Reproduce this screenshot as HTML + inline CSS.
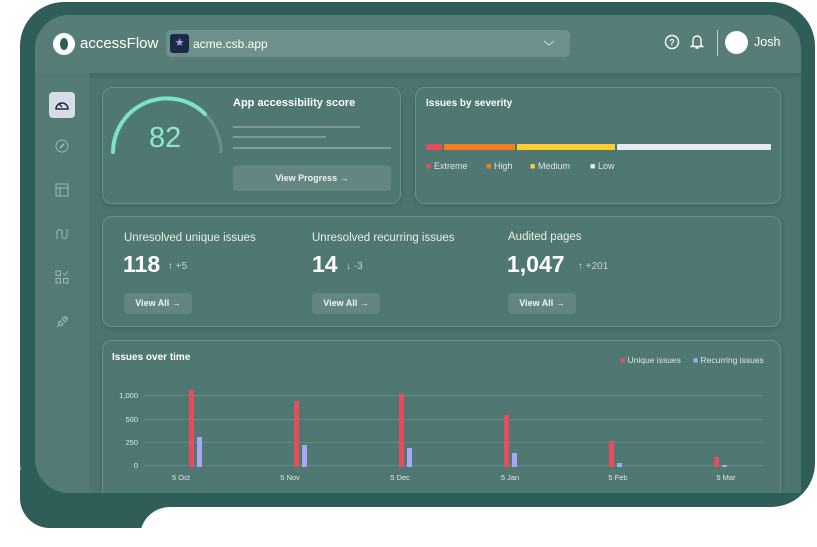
<!DOCTYPE html>
<html><head><meta charset="utf-8"><style>
*{box-sizing:border-box;margin:0;padding:0}
body{width:817px;height:535px;background:#fff;position:relative;overflow:hidden;font-family:"Liberation Sans",sans-serif;color:#fff}
.frame{position:absolute;left:20px;top:2px;width:795px;height:505px;background:#2f5d57;border-radius:44px}
.tail{position:absolute;left:20px;top:470px;width:170px;height:58px;background:#2f5d57;border-radius:0 0 0 30px}
.tailc{position:absolute;left:140px;top:507px;width:120px;height:40px;background:#fff;border-radius:30px 0 0 0}
.inner{position:absolute;left:35px;top:15px;width:766px;height:478px;background:#4c7570;border-radius:34px 34px 0 34px;overflow:hidden}
.hdr{position:absolute;left:0;top:0;width:766px;height:58px;background:#577d78;box-shadow:0 2px 6px rgba(0,0,0,.15)}
.side{position:absolute;left:0;top:58px;width:55px;height:420px;background:#537a74}
.card{position:absolute;background:#4f7872;border:1px solid #6b8f89;border-radius:10px;box-shadow:0 2px 6px rgba(0,0,0,.15)}
.t{position:absolute;font-size:11px;white-space:nowrap}
.btn{position:absolute;background:#628782;border-radius:4px;font-size:9px;font-weight:bold;text-align:center;color:#f0f4f3}
.small{font-size:7.5px;color:#dde7e5}
</style></head><body>
<div class="tail"></div><div class="tailc"></div>
<div class="frame"></div>
<div class="inner">
 <div class="hdr">
  <div style="position:absolute;left:18px;top:18px;width:22px;height:22px;border-radius:50%;background:#fff"></div>
  <div style="position:absolute;left:25px;top:23px;width:8px;height:12px;border-radius:50%;background:#2f5d57"></div>
  <div class="t" style="left:45px;top:20px;font-size:15px">accessFlow</div>
  <div style="position:absolute;left:131px;top:15px;width:404px;height:27px;background:#6c908b;border-radius:5px"></div>
  <div style="position:absolute;left:135px;top:19px;width:19px;height:19px;background:#1c2b44;border-radius:3px;color:#a9a3f0;font-size:11px;text-align:center;line-height:19px">★</div>
  <div class="t" style="left:158px;top:22px;font-size:12px">acme.csb.app</div>
  <svg style="position:absolute;left:508px;top:23px" width="12" height="10"><path d="M1 3l5 4 5-4" stroke="#b8ccc9" fill="none" stroke-width="1.3"/></svg>
  <svg style="position:absolute;left:629px;top:19px" width="16" height="16"><circle cx="8" cy="8" r="6.5" stroke="#fff" fill="none" stroke-width="1.4"/><text x="8" y="11.5" font-size="9" fill="#fff" text-anchor="middle" font-family="Liberation Sans" font-weight="bold">?</text></svg>
  <svg style="position:absolute;left:655px;top:18px" width="14" height="17"><path d="M3 12V7a4 4 0 018 0v5l1.5 1.5h-11z M5.5 15h3" stroke="#fff" fill="none" stroke-width="1.4"/></svg>
  <div style="position:absolute;left:682px;top:15px;width:1px;height:26px;background:#c9d6d4"></div>
  <div style="position:absolute;left:690px;top:16px;width:23px;height:23px;border-radius:50%;background:#fff"></div>
  <div class="t" style="left:719px;top:20px;font-size:12.5px">Josh</div>
 </div>
 <div class="side">
  <div style="position:absolute;left:14px;top:19px;width:26px;height:26px;background:#d6dde6;border-radius:4px"></div>
  <svg style="position:absolute;left:19px;top:24px" width="16" height="16"><path d="M2 12a6 6 0 1112 0z" stroke="#1e2e3e" fill="none" stroke-width="1.5"/><path d="M8 10l-3-3" stroke="#1e2e3e" stroke-width="1.5"/></svg>
  <svg style="position:absolute;left:20px;top:66px" width="14" height="14"><circle cx="7" cy="7" r="6" stroke="#9dbab5" fill="none"/><path d="M4.5 9.5l2-3 3-2-2 3z" stroke="#9dbab5" fill="none"/></svg>
  <svg style="position:absolute;left:20px;top:110px" width="14" height="14"><rect x="1" y="1" width="12" height="12" stroke="#9dbab5" fill="none"/><path d="M1 5h12M5 5v8" stroke="#9dbab5"/></svg>
  <svg style="position:absolute;left:20px;top:153px" width="14" height="16"><path d="M2 13V6a2.5 2.5 0 015 0v4a2.5 2.5 0 005 0V3" stroke="#9dbab5" fill="none"/></svg>
  <svg style="position:absolute;left:20px;top:197px" width="14" height="14"><rect x="1" y="1" width="4.5" height="4.5" stroke="#9dbab5" fill="none"/><rect x="1" y="8.5" width="4.5" height="4.5" stroke="#9dbab5" fill="none"/><rect x="8.5" y="8.5" width="4.5" height="4.5" stroke="#9dbab5" fill="none"/><path d="M8 3l2 2 3-4" stroke="#9dbab5" fill="none"/></svg>
  <svg style="position:absolute;left:20px;top:241px" width="15" height="15"><path d="M2 13l3-3M10 2l3 3M5 7l3 3-2 2-3-3zM7 5l3 3 2-2-3-3z" stroke="#9dbab5" fill="none"/></svg>
 </div>
 <div class="card" style="left:67px;top:72px;width:299px;height:117px"></div>
 <div class="card" style="left:380px;top:72px;width:366px;height:117px"></div>
 <div class="card" style="left:67px;top:201px;width:679px;height:111px"></div>
 <div class="card" style="left:67px;top:325px;width:679px;height:170px"></div>
</div>
<!-- score card content -->
<svg style="position:absolute;left:0;top:0" width="300" height="170"><path d="M205 114A54 54 0 0 1 221 152" stroke="#6c8f8a" stroke-width="3" fill="none" stroke-linecap="round"/><path d="M113 152A54 54 0 0 1 205 114" stroke="#7de3c7" stroke-width="4" fill="none" stroke-linecap="round"/></svg>
<div class="t" style="left:149px;top:122px;font-size:29px;color:#8fe6cc">82</div>
<div class="t" style="left:233px;top:97px;font-size:11px;font-weight:bold">App accessibility score</div>
<div style="position:absolute;left:233px;top:126px;width:127px;height:2px;background:#7b9c97"></div>
<div style="position:absolute;left:233px;top:136px;width:93px;height:2px;background:#7b9c97"></div>
<div style="position:absolute;left:233px;top:147px;width:158px;height:2px;background:#7b9c97"></div>
<div class="btn" style="left:233px;top:165px;width:158px;height:26px;line-height:26px">View Progress →</div>
<!-- severity -->
<div class="t" style="left:426px;top:98px;font-size:10px;font-weight:bold">Issues by severity</div>
<div style="position:absolute;left:426px;top:144px;width:16px;height:6px;background:#e84c5a;border-radius:1px"></div>
<div style="position:absolute;left:444px;top:144px;width:71px;height:6px;background:#f47c20"></div>
<div style="position:absolute;left:517px;top:144px;width:98px;height:6px;background:#fdce34"></div>
<div style="position:absolute;left:617px;top:144px;width:154px;height:6px;background:#e8ebf3;border-radius:1px"></div>
<div class="t small" style="left:426px;top:161px;font-size:9px"><span style="color:#e84c5a">■</span> Extreme</div>
<div class="t small" style="left:486px;top:161px;font-size:9px"><span style="color:#f47c20">■</span> High</div>
<div class="t small" style="left:530px;top:161px;font-size:9px"><span style="color:#fdce34">■</span> Medium</div>
<div class="t small" style="left:590px;top:161px;font-size:9px"><span style="color:#e8ebf3">■</span> Low</div>
<!-- stats -->
<div class="t" style="left:124px;top:232px;font-size:11.5px;color:#e6eeec">Unresolved unique issues</div>
<div class="t" style="left:123px;top:251px;font-size:23px;font-weight:bold">118</div>
<div class="t" style="left:168px;top:261px;font-size:10px;color:#c3d3d0">↑ +5</div>
<div class="btn" style="left:124px;top:293px;width:68px;height:21px;line-height:21px">View All →</div>
<div class="t" style="left:312px;top:232px;font-size:11.5px;color:#e6eeec">Unresolved recurring issues</div>
<div class="t" style="left:312px;top:251px;font-size:23px;font-weight:bold">14</div>
<div class="t" style="left:346px;top:261px;font-size:10px;color:#c3d3d0">↓ -3</div>
<div class="btn" style="left:312px;top:293px;width:68px;height:21px;line-height:21px">View All →</div>
<div class="t" style="left:508px;top:231px;font-size:11.5px;color:#e6eeec">Audited pages</div>
<div class="t" style="left:507px;top:251px;font-size:23px;font-weight:bold">1,047</div>
<div class="t" style="left:578px;top:261px;font-size:10px;color:#c3d3d0">↑ +201</div>
<div class="btn" style="left:508px;top:293px;width:68px;height:21px;line-height:21px">View All →</div>
<!-- chart -->
<div class="t" style="left:112px;top:352px;font-size:10px;font-weight:bold">Issues over time</div>
<div class="t small" style="left:620px;top:355px;font-size:8.5px"><span style="color:#e84c5a">■</span> Unique issues</div>
<div class="t small" style="left:693px;top:355px;font-size:8.5px"><span style="color:#a7a6f5">■</span> Recurring issues</div>
<svg style="position:absolute;left:100px;top:380px" width="700" height="110" font-family="Liberation Sans" font-size="7.5" fill="#dde7e5">
<g stroke="#658a85" stroke-width="1"><path d="M44 15.5H663M44 39.5H663M44 62.5H663M44 85.5H663"/></g>
<g text-anchor="end"><text x="38" y="18">1,000</text><text x="38" y="42">500</text><text x="38" y="65">250</text><text x="38" y="88">0</text></g>
<g fill="#e84c5a"><rect x="89" y="10" width="5" height="77"/><rect x="194" y="21" width="5" height="66"/><rect x="299" y="14" width="5" height="73"/><rect x="404" y="35" width="5" height="52"/><rect x="509" y="61" width="5" height="26"/><rect x="614" y="77" width="5" height="10"/></g>
<g fill="#a7a6f5"><rect x="97" y="57" width="5" height="30"/><rect x="202" y="65" width="5" height="22"/><rect x="307" y="68" width="5" height="19"/><rect x="412" y="73" width="5" height="14"/><rect x="517" y="83" width="5" height="4"/><rect x="622" y="85" width="5" height="2"/></g>
<g text-anchor="middle"><text x="81" y="100">5 Oct</text><text x="190" y="100">5 Nov</text><text x="300" y="100">5 Dec</text><text x="410" y="100">5 Jan</text><text x="518" y="100">5 Feb</text><text x="626" y="100">5 Mar</text></g>
</svg>
</body></html>
